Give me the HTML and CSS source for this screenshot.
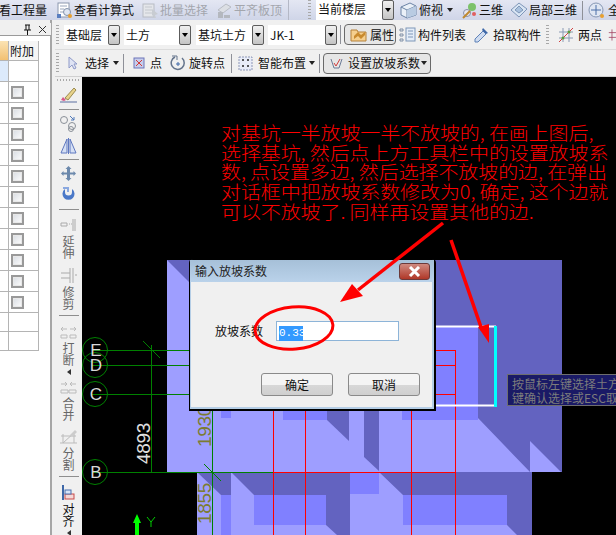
FILE: index.html
```html
<!DOCTYPE html>
<html lang="zh">
<head>
<meta charset="utf-8">
<title>输入放坡系数</title>
<link rel="stylesheet" href="styles.css">
</head>
<body>
<div class="app">
  <div class="topbar">
    <span class="tool clip-left">看工程量</span>
    <span class="tool ml9"><svg class="ic" width="17" height="17" viewBox="0 0 17 17"><rect x="2" y="1" width="11" height="14" fill="#fff" stroke="#8b97ad"/><path d="M4 4h7M4 7h4M4 10h3" stroke="#9aa6bb"/><circle cx="11" cy="10" r="3.5" fill="#dfe6f2" stroke="#8090a8"/><circle cx="14" cy="14" r="2" fill="#e8a030"/><rect x="1" y="12" width="4" height="4" fill="#5a7fc0"/></svg>查看计算式</span>
    <span class="tool ml8 off"><svg class="ic" width="17" height="17" viewBox="0 0 17 17"><rect x="1" y="2" width="11" height="13" fill="#e4e6ea" stroke="#b8bcc4"/><path d="M3 5h7M3 8h7M3 11h7" stroke="#c4c8ce"/><path d="M10 7l6 5-3 1 1 3-2 0-1-3-1 1z" fill="#c8ccd2"/></svg>批量选择</span>
    <span class="tool ml8 off"><svg class="ic" width="17" height="17" viewBox="0 0 17 17"><path d="M2 8l8-6 5 3-8 6z" fill="#dcdfe4" stroke="#b8bcc4"/><path d="M2 16v-6h5v6zM8 16v-3h6v3z" fill="#b4b8bf"/></svg>平齐板顶</span>
    <span class="vline vl-top"></span>
    <span class="grip grip-top"></span>
    <span class="sel sel-floor"><span class="sel-val">当前楼层</span><span class="sel-btn"></span></span>
    <span class="tool ml5"><svg class="ic" width="18" height="17" viewBox="0 0 18 17"><path d="M2 5l9-4 6 3v9l-9 3-6-3z" fill="#eaf0f8" stroke="#6c84a6"/><path d="M2 5l6 3v8M8 8l9-4" fill="none" stroke="#6c84a6"/><path d="M8 8l9-4v9l-9 3z" fill="#b9cbe2"/></svg><span class="ml1">俯视</span><i class="caret ml4"></i></span>
    <span class="tool ml8"><svg class="ic" width="17" height="17" viewBox="0 0 17 17"><circle cx="11" cy="5" r="4" fill="#7cc26a"/><circle cx="6" cy="11" r="3.5" fill="#e8e8f2" stroke="#8a8fa8"/><path d="M2 16l7-7" stroke="#c08a30" stroke-width="2"/><circle cx="13" cy="12" r="2" fill="#e06060"/></svg>三维</span>
    <span class="tool ml7"><svg class="ic" width="18" height="17" viewBox="0 0 18 17"><path d="M1 8l8-7 8 6-8 8z" fill="#d9e5f4" stroke="#7f97b8"/><path d="M5 8l4-4 4 4-4 3z" fill="#a9c1de" stroke="#7f97b8"/></svg>局部三维</span>
    <span class="vline vl-top2"></span>
    <span class="tool ml5"><svg class="ic" width="17" height="17" viewBox="0 0 17 17"><circle cx="8" cy="8" r="7" fill="#dfe6f2" stroke="#8798b4"/><path d="M8 3v10M3 8h10" stroke="#4a6fa8"/><circle cx="14" cy="14" r="2" fill="#e8a030"/></svg><span class="ml2">全</span></span>
  </div>
  <div class="main">
    <aside class="panel">
      <div class="panel-head"><svg width="9" height="11" viewBox="0 0 9 11"><path d="M2 1h5M3 1v5M6 1v5M1 6h7M4.500 6v5" stroke="#111" fill="none"/></svg><svg class="ml6" width="9" height="9" viewBox="0 0 9 9"><path d="M1 1l7 7M8 1l-7 7" stroke="#333" fill="none"/></svg></div>
      <div class="grid">
        <div class="row head"><div class="c1 c-orange"></div><div class="c2 c-head">附加</div></div>
        <div class="row"><div class="c1 c-blue"></div><div class="c2"></div></div>
        <div class="row"><div class="c1"></div><div class="c2"><i class="check"></i></div></div>
        <div class="row"><div class="c1"></div><div class="c2"><i class="check"></i></div></div>
        <div class="row"><div class="c1"></div><div class="c2"><i class="check"></i></div></div>
        <div class="row"><div class="c1"></div><div class="c2"><i class="check"></i></div></div>
        <div class="row"><div class="c1"></div><div class="c2"><i class="check"></i></div></div>
        <div class="row"><div class="c1"></div><div class="c2"><i class="check"></i></div></div>
        <div class="row"><div class="c1"></div><div class="c2"><i class="check"></i></div></div>
        <div class="row"><div class="c1"></div><div class="c2"><i class="check"></i></div></div>
        <div class="row"><div class="c1"></div><div class="c2"><i class="check"></i></div></div>
        <div class="row"><div class="c1"></div><div class="c2"><i class="check"></i></div></div>
        <div class="row"><div class="c1"></div><div class="c2"><i class="check"></i></div></div>
        <div class="row short"><div class="c1"></div><div class="c2"></div></div>
        <div class="row short"><div class="c1"></div><div class="c2"></div></div>
      </div>
    </aside>
    <div class="work">
      <div class="bar bar-2">
        <span class="grip"></span>
        <span class="sel s1"><span class="sel-val">基础层</span><span class="sel-btn"></span></span>
        <span class="sel s2"><span class="sel-val">土方</span><span class="sel-btn"></span></span>
        <span class="sel s3"><span class="sel-val">基坑土方</span><span class="sel-btn"></span></span>
        <span class="sel s4"><span class="sel-val">JK-1</span><span class="sel-btn"></span></span>
        <span class="vline ml3"></span>
        <span class="tool toggled t-prop"><svg class="ic" width="18" height="15" viewBox="0 0 18 15"><path d="M1 3h6l1 2h8v9H1z" fill="#f5cf8e" stroke="#b5813a"/><path d="M4 9l4-4 3 3 4-3v3l-4 4-3-3-4 3z" fill="#c98a2e"/></svg>属性</span>
        <span class="tool ml3"><svg class="ic" width="17" height="15" viewBox="0 0 17 15"><path d="M1 2h3v2H1zM1 7h3v2H1zM1 12h3v2H1z" fill="none" stroke="#7f8fa6"/><rect x="7" y="1" width="9" height="13" fill="#e4edf8" stroke="#7f97b8"/><path d="M9 4h5M9 7h5M9 10h5" stroke="#7f97b8"/></svg><span class="ml1">构件列表</span></span>
        <span class="tool ml7"><svg class="ic" width="17" height="17" viewBox="0 0 17 17"><path d="M10 5l3 3-8 8-3 0 0-3z" fill="#cfdcf0" stroke="#5f82b8"/><path d="M10 2l5 5-2 1-4-4z" fill="#3f68a8"/></svg><span class="ml2">拾取构件</span></span>
        <span class="grip ml5"></span>
        <span class="tool ml9"><svg class="ic" width="16" height="16" viewBox="0 0 16 16"><path d="M1 5h14M1 11h14M5 1v14M11 1v14" stroke="#8a9ab4" fill="none"/><path d="M1 15L15 1" stroke="#d04040"/><circle cx="11" cy="5" r="1.500" fill="#5a9a3a"/><circle cx="5" cy="11" r="1.500" fill="#5a9a3a"/></svg><span class="ml3">两点</span></span>
        <svg class="ml6" width="10" height="16" viewBox="0 0 10 16"><path d="M1 5h9M1 11h9M5 1v14" stroke="#a04060" fill="none"/></svg>
      </div>
      <div class="bar bar-3">
        <span class="grip"></span>
        <span class="tool ml9"><svg class="ic" width="10" height="14" viewBox="0 0 10 14"><path d="M1 1v11l3-3 2 4 2-1-2-4h3z" fill="#dfe4f4" stroke="#8f9ac8"/></svg><span class="ml6">选择</span><i class="caret ml4"></i></span>
        <span class="vline ml4"></span>
        <span class="tool ml9"><svg class="ic" width="12" height="12" viewBox="0 0 12 12"><rect x="1" y="1" width="10" height="10" fill="#c6cdec" stroke="#6c74b8"/><path d="M3 3l6 6M9 3l-6 6" stroke="#d03a3a"/></svg><span class="ml4">点</span></span>
        <span class="tool ml8"><svg class="ic" width="16" height="16" viewBox="0 0 16 16"><path d="M5 2a6.500 6.500 0 1 0 7 1" fill="none" stroke="#64748c" stroke-width="1.500"/><path d="M2 1h5v4" fill="none" stroke="#64748c"/><path d="M8 7v4M6 9h4" stroke="#3f68a8"/></svg><span class="ml2">旋转点</span></span>
        <span class="vline ml6"></span>
        <span class="tool ml6"><svg class="ic" width="15" height="15" viewBox="0 0 15 15"><rect x="1" y="1" width="13" height="13" fill="#e8ecf8" stroke="#8d97b6" stroke-dasharray="2 1"/><path d="M4 4h2M9 4h2M4 10h2M9 10h2M5 3v2M10 3v2M5 9v2M10 9v2" stroke="#222"/></svg><span class="ml4">智能布置</span><i class="caret ml3"></i></span>
        <span class="vline ml4"></span>
        <span class="tool toggled t-slope"><svg class="ic" width="13" height="13" viewBox="0 0 13 13"><path d="M1 2l3 9h5l3-9" fill="none" stroke="#6c7c98"/><path d="M4 6l2 3 4-7" fill="none" stroke="#d03a3a"/></svg><span class="ml4">设置放坡系数</span><i class="caret ml1"></i></span>
      </div>
      <div class="bottom">
        <div class="vbar">
          <span class="grip-h"></span>
          <svg class="vi m5" width="17" height="17" viewBox="0 0 17 17"><path d="M5 12L14 2l2 2-8 10z" fill="#e8d38a" stroke="#9a8a50"/><path d="M3 11l3 3-2 1-3-1z" fill="#d85a8a"/><path d="M0 16h17" stroke="#5a6fa0"/></svg>
          <i class="vsep m6"></i>
          <svg class="vi m5" width="17" height="17" viewBox="0 0 17 17"><circle cx="4" cy="5" r="3.500" fill="none" stroke="#8a9098"/><circle cx="12" cy="11" r="3.500" fill="none" stroke="#8a9098"/><circle cx="11" cy="14" r="2.500" fill="none" stroke="#8a9098"/><path d="M10 1l4 4M14 2v3h-3" fill="none" stroke="#4f78b8"/></svg>
          <svg class="vi m6" width="17" height="16" viewBox="0 0 17 16"><path d="M7 1v14H1zM10 1v14h6z" fill="#d6e0f4" stroke="#5f78c0"/><path d="M8.500 0v16" stroke="#5f78c0"/></svg>
          <i class="vsep m5"></i>
          <svg class="vi m6" width="15" height="15" viewBox="0 0 15 15"><path d="M7.500 0l3 3H9v3.500h3.500V5l2.500 2.500L12.500 10V8.500H9V12h1.500l-3 3-3-3H6V8.500H2.500V10L0 7.500 2.500 5v1.500H6V3H4.500z" fill="#6c89ac"/></svg>
          <svg class="vi m6" width="15" height="15" viewBox="0 0 15 15"><path d="M4 2a6 6 0 1 0 7 0v3a3.500 3.500 0 1 1-7 0z" fill="#4a78c8"/><path d="M2 1h5v4" fill="none" stroke="#8aa8e0" stroke-width="2"/></svg>
          <i class="vsep m7"></i>
          <svg class="vi m7" width="17" height="15" viewBox="0 0 17 15"><path d="M1 6h6v3H1zM9 7h1M11 7h1M13 2v12M15 2v12" fill="none" stroke="#aaa"/></svg>
          <span class="vt">延伸</span>
          <svg class="vi m9" width="17" height="15" viewBox="0 0 17 15"><path d="M1 5h9M1 10h9M10 0v15M13 0v15M15 7h2" fill="none" stroke="#aaa"/></svg>
          <span class="vt">修剪</span>
          <i class="vsep m5"></i>
          <svg class="vi m10" width="17" height="13" viewBox="0 0 17 13"><path d="M1 9h6v3H1zM10 9h6v3h-6zM7 3H1m2-2L1 3l2 2M10 3h6m-2-2 2 2-2 2" fill="none" stroke="#bbb"/></svg>
          <span class="vt">打断</span>
          <i class="tri-left"></i>
          <svg class="vi m6" width="17" height="13" viewBox="0 0 17 13"><path d="M1 9h7v3H1zM9 9h7v3H9zM1 3h6m-2-2 2 2-2 2M16 3h-6m2-2-2 2 2 2" fill="none" stroke="#bbb"/></svg>
          <span class="vt mt6">合并</span>
          <svg class="vi m8" width="17" height="15" viewBox="0 0 17 15"><path d="M0 14h17M3 14L15 3M3 14V5M14 14V5M1 7h15" fill="none" stroke="#bbb"/><path d="M10 6l5-5 2 2-5 5z" fill="#ccc"/></svg>
          <span class="vt">分割</span>
          <i class="vsep m5"></i>
          <svg class="vi m8" width="13" height="15" viewBox="0 0 13 15"><path d="M1 0v15" stroke="#3f68a8" stroke-width="2"/><rect x="3" y="9" width="9" height="5" fill="#f4d8d8" stroke="#c84a4a"/><rect x="3" y="5" width="6" height="4" fill="#d8e4f8" stroke="#4a70b0"/></svg>
          <span class="vt vt-dark">对齐</span>
          <i class="tri-left"></i>
        </div>
        <div class="canvas">
          <svg class="scene" width="534" height="458" viewBox="82 77 534 458">
            <rect class="dark" x="167" y="260" width="395" height="212"/>
            <polygon class="light" points="167,260 478,260 478,418 530,472 167,472"/>
            <polygon class="dark" points="167,260 190,260 190,283"/>
            <rect class="dark" x="430" y="260" width="48" height="70"/>
            <polygon class="light" points="530,441 561,472 530,472"/>
            <rect class="mid" x="430" y="327" width="48" height="93"/>
            <rect class="mid" x="221" y="400" width="10" height="18"/>
            <rect class="mid" x="283" y="400" width="44" height="20"/>
            <polygon class="dark" points="327,400 349,400 349,441 327,420"/>
            <polygon class="dark" points="364,400 379,400 379,471 364,457"/>
            <rect class="mid" x="402" y="400" width="76" height="20"/>
            <rect class="dark" x="197" y="472" width="335" height="63"/>
            <polygon class="light" points="197,472 221,495 221,535 197,535"/>
            <rect class="mid" x="221" y="495" width="10" height="40"/>
            <polygon class="light" points="231,472 254,495 254,525 326,525 337,535 231,535"/>
            <rect class="mid" x="254" y="495" width="72" height="30"/>
            <rect class="mid" x="350" y="472" width="29" height="22"/>
            <polygon class="light" points="350,494 379,494 379,472 403,495 403,525 507,525 517,535 350,535"/>
            <rect class="mid" x="403" y="495" width="104" height="30"/>
            <g class="red">
              <path d="M273.500 350V535M305.500 350V535M411.500 350V535M455.500 350V535M273 350.500H455.500M273 365.500H455.500M273 394.500H455.500M273 472.500H455.500"/>
            </g>
            <path class="white" d="M400 326.500H496M400 405.500H496"/>
            <path class="cyan" d="M495.500 326V407"/>
            <g class="green">
              <circle cx="95" cy="350" r="12.500"/><circle cx="95" cy="365" r="12.500"/><circle cx="95" cy="394" r="12.500"/><circle cx="95" cy="472" r="12.500"/>
              <path d="M92 350.500H273M92 365.500H273M92 394.500H273M92 472.500H273M151.500 345V473M212.500 400V535M143 341L160 358M204 464L221 481"/>
              <path class="bright" d="M147 517L151 522L155 517M151 522V527"/>
            </g>
            <polygon class="arrow-up" points="137,514 141,523 139,523 139,535 135,535 135,523 133,523"/>
            <text class="axis" x="96" y="356">E</text>
            <text class="axis" x="96" y="371">D</text>
            <text class="axis" x="96" y="400">C</text>
            <text class="axis" x="96" y="478">B</text>
            <text class="dim dim-w" transform="translate(150 464) rotate(-90)">4893</text>
            <text class="dim dim-o" transform="translate(211 447) rotate(-90)">1930</text>
            <text class="dim dim-o" transform="translate(211 524) rotate(-90)">1855</text>
          </svg>
          <p class="note">对基坑一半放坡一半不放坡的, 在画上图后,<br>选择基坑, 然后点上方工具栏中的设置放坡系<br>数, 点设置多边, 然后选择不放坡的边, 在弹出<br>对话框中把放坡系数修改为0, 确定, 这个边就<br>可以不放坡了. 同样再设置其他的边.</p>
          <div class="tip">按鼠标左键选择土方<br>键确认选择或ESC取消</div>
          <div class="dialog">
            <div class="dlg-title"><span>输入放坡系数</span><span class="dlg-close"><svg width="13" height="11" viewBox="0 0 13 11"><path d="M2 1l9 9M11 1l-9 9" stroke="#fff" stroke-width="3"/></svg></span></div>
            <div class="dlg-body">
              <div class="dlg-field"><span>放坡系数</span><span class="dlg-input"><span class="selected">0.33</span></span></div>
              <div class="dlg-actions"><button class="btn" type="button">确定</button><button class="btn" type="button">取消</button></div>
            </div>
          </div>
          <svg class="overlay" width="534" height="458" viewBox="82 77 534 458">
            <ellipse class="ring" cx="294" cy="328" rx="39" ry="21" transform="rotate(-5 294 328)"/>
            <path class="ink" d="M443 223L358 290"/>
            <polygon class="ink-fill" points="340,302 352,284 363,296"/>
            <path class="ink" d="M451 240L482 330"/>
            <polygon class="ink-fill" points="489,343 478,327 489,324"/>
          </svg>
        </div>
      </div>
    </div>
  </div>
</div>
</body>
</html>
```
FILE: styles.css
```css
* { box-sizing: border-box; }
html, body { margin: 0; padding: 0; }
body {
  width: 616px;
  height: 535px;
  overflow: hidden;
  background: #f0f0f0;
  font: 12px/14px "Noto Sans CJK SC", "Liberation Sans", sans-serif;
  color: #111;
}
.app { width: 616px; height: 535px; display: flex; flex-direction: column; overflow: hidden; }

.topbar {
  flex: 0 0 20px;
  display: flex;
  align-items: center;
  white-space: nowrap;
  background: linear-gradient(#e4e7f3, #cfd5e8);
  overflow: hidden;
}
.tool { display: inline-flex; align-items: center; white-space: nowrap; flex: none; }
.ic { flex: none; margin-right: 1px; }
.off { color: #a3a6ad; }
.clip-left { margin-left: -1px; }
.ml1 { margin-left: 1px; } .ml2 { margin-left: 2px; }
.ml3 { margin-left: 3px; } .ml4 { margin-left: 4px; } .ml5 { margin-left: 5px; }
.ml6 { margin-left: 6px; } .ml7 { margin-left: 7px; } .ml8 { margin-left: 8px; }
.ml9 { margin-left: 9px; } .ml10 { margin-left: 10px; }
.vline { flex: none; width: 1px; height: 19px; background: #8e9098; }
.vl-top { margin-left: 6px; height: 20px; background: #b4b8c6; }
.vl-top2 { margin-left: 5px; }
.grip {
  flex: none;
  width: 3px;
  height: 20px;
  background: repeating-linear-gradient(#a8a8a8 0 1px, transparent 1px 3px);
}
.grip-top { margin-left: 19px; }
.caret {
  display: inline-block;
  width: 0;
  height: 0;
  border: 3.5px solid transparent;
  border-top: 4px solid #222;
  border-bottom: 0;
}

.sel { flex: none; display: inline-flex; height: 20px; }
.sel-val { flex: 1; background: #fff; padding: 3px 2px 0; overflow: hidden; white-space: nowrap; }
.sel-btn {
  flex: none;
  width: 12px;
  position: relative;
  background: linear-gradient(#f0f0f0, #c4c4c4);
  border: 1px solid #5c5c5c;
  border-radius: 2px;
}
.sel-btn::after {
  content: "";
  position: absolute;
  left: 1.500px;
  top: 7px;
  border: 3.500px solid transparent;
  border-top: 4px solid #000;
  border-bottom: 0;
}
.sel-floor { width: 78px; margin-left: 5px; }
.topbar .sel-val { padding-top: 2px; }
.s1 { width: 56px; margin-left: 5px; }
.s2 { width: 67px; margin-left: 4px; }
.s3 { width: 68px; margin-left: 5px; }
.s4 { width: 69px; margin-left: 4px; }

.main { flex: 1; display: flex; min-height: 0; }
.panel {
  flex: 0 0 52px;
  padding-top: 3px;
  background: #fff;
  border-right: 2px solid #a6a6a6;
  position: relative;
}
.panel::before {
  content: "";
  position: absolute;
  left: 0;
  right: 0;
  top: 0;
  height: 3px;
  background: #f0f0f0;
}
.panel-head {
  height: 13px;
  background: #f0f0f0;
  border-bottom: 1px solid #9a9a9a;
  display: flex;
  align-items: center;
  justify-content: flex-end;
  padding-right: 4px;
  margin-right: -1px;
}
.grid { margin-top: 5px; width: 39px; border-right: 1px solid #b4b4b4; }
.row { display: flex; height: 21px; border-bottom: 1px solid #b4b4b4; }
.row.head { height: 20px; }
.row.short { height: 19px; }
.c1 { flex: 0 0 8px; }
.c2 { flex: 1; border-left: 1px solid #b4b4b4; display: flex; align-items: center; padding-left: 2px; }
.c-orange { background: linear-gradient(#fbe3b4, #f2c072); }
.c-blue { background: #dceafb; }
.c-head { background: #f5f5f5; font-size: 12px; padding-left: 1px; }
.check {
  width: 13px;
  height: 13px;
  border: 2px solid #999;
  background: linear-gradient(135deg, #d8dce2, #fdfdfd);
  outline: 1px solid #e8e8e8;
  outline-offset: -3px;
}

.work { flex: 1; min-width: 0; display: flex; flex-direction: column; padding-left: 3px; }
.bar {
  display: flex;
  align-items: center;
  background: #f0f0f0;
  white-space: nowrap;
  overflow: hidden;
  padding-left: 1px;
}
.bar-2 { flex: 0 0 30px; border-bottom: 1px solid #dcdcdc; }
.bar-3 { flex: 0 0 27px; border-bottom: 1px solid #d0d0d0; }
.toggled {
  height: 21px;
  background: #e6e6e6;
  border: 1px solid #6a6a6a;
  border-radius: 4px;
}
.t-prop { width: 52px; margin-left: 3px; padding-left: 5px; gap: 1px; }
.t-slope { width: 108px; margin-left: 3px; padding-left: 6px; }

.bottom { flex: 1; min-height: 0; display: flex; }
.vbar {
  flex: 0 0 27px;
  display: flex;
  flex-direction: column;
  align-items: center;
  background: #f0f0f0;
  overflow: hidden;
}
.grip-h {
  flex: none;
  width: 24px;
  height: 2px;
  margin-top: 2px;
  background: repeating-linear-gradient(90deg, #a8a8a8 0 1px, transparent 1px 3px);
}
.vi { flex: none; display: block; }
.m4 { margin-top: 4px; } .m5 { margin-top: 5px; } .m6 { margin-top: 6px; }
.m7 { margin-top: 7px; } .m8 { margin-top: 8px; } .m9 { margin-top: 9px; } .m10 { margin-top: 10px; }
.mt6 { margin-top: 6px; }
.vsep { flex: none; width: 20px; height: 1px; background: #8e8e8e; }
.vt { flex: none; width: 12px; margin-top: 3px; line-height: 12px; color: #676767; }
.vt-dark { color: #111; }
.tri-left {
  flex: none;
  margin-top: 3px;
  width: 0;
  height: 0;
  border: 3px solid transparent;
  border-right: 4px solid #333;
  border-left: 0;
}

.canvas { flex: 1; position: relative; background: #000; overflow: hidden; }
.scene, .overlay { position: absolute; left: 0; top: 0; display: block; }
.overlay { pointer-events: none; }
.dark { fill: #6363c0; }
.light { fill: #9e9eff; }
.mid { fill: #8080ff; }
.red path { fill: none; stroke: #f00; }
.white { fill: none; stroke: #fff; stroke-width: 2px; }
.cyan { fill: none; stroke: #0ff; stroke-width: 3px; }
.green circle, .green path { fill: none; stroke: #008000; }
.green .bright { stroke: #0c0; }
.arrow-up { fill: #0f0; }
.axis { font: 17px "Liberation Sans", sans-serif; fill: #d8d8d8; text-anchor: middle; }
.dim { font: 19px "Liberation Sans", sans-serif; letter-spacing: -0.3px; }
.dim-w { fill: #e0e0e0; }
.dim-o { fill: #7c7c30; }
.ring { fill: none; stroke: #f00; stroke-width: 3px; }
.ink { fill: none; stroke: #f00; stroke-width: 3.500px; }
.ink-fill { fill: #f00; }

.note {
  position: absolute;
  left: 139px;
  top: 46px;
  margin: 0;
  color: #f00;
  font-size: 20px;
  font-weight: 300;
  letter-spacing: -0.1px;
  line-height: 21.200px;
  white-space: nowrap;
  transform: scaleY(0.92);
  transform-origin: left top;
}
.tip {
  position: absolute;
  left: 425px;
  top: 297px;
  width: 130px;
  height: 32px;
  padding: 2px 0 0 4px;
  background: #1a1a66;
  border: 1px solid #6e6e6e;
  color: #7c7c7c;
  line-height: 14px;
  white-space: nowrap;
  overflow: hidden;
}
.dialog {
  position: absolute;
  left: 107px;
  top: 182px;
  width: 247px;
  height: 152px;
  display: flex;
  flex-direction: column;
  border: 1px solid #000;
  border-right-width: 2px;
  border-bottom-width: 2px;
  border-radius: 4px 4px 0 0;
  background: #b5cee6;
  padding: 0 2px 2px 1px;
}
.dlg-title {
  flex: 0 0 22px;
  display: flex;
  align-items: center;
  justify-content: space-between;
  padding: 0 2px 0 5px;
  background: linear-gradient(#a6c0d8, #bad2ea);
  margin: 0 -2px 0 -1px;
  color: #222;
}
.dlg-close {
  width: 31px;
  height: 17px;
  display: flex;
  align-items: center;
  justify-content: center;
  background: linear-gradient(#d08a80, #b03828);
  border: 1px solid #6c3a3a;
  border-radius: 3px;
  margin-right: 2px;
}
.dlg-body { flex: 1; background: #f0f0f0; display: flex; flex-direction: column; padding: 39px 12px 0 24px; }
.dlg-field { display: flex; align-items: center; gap: 13px; height: 20px; }
.dlg-input {
  width: 123px;
  height: 20px;
  background: #fff;
  border: 1px solid #8db4d8;
  padding: 2px 0 0 2px;
}
.selected { display: inline-block; width: 24px; height: 15px; background: #3399ff; color: #fff; line-height: 15px; text-align: center; font-family: "Liberation Mono", monospace; font-size: 11px; }
.dlg-actions { display: flex; justify-content: flex-end; gap: 15px; margin-top: 32px; }
.btn {
  width: 72px;
  height: 23px;
  padding: 0;
  font: inherit;
  color: #111;
  background: linear-gradient(#f4f4f4 0 50%, #d8d8d8 50%, #cfcfcf);
  border: 1px solid #8a8a8a;
  border-radius: 3px;
}
```
